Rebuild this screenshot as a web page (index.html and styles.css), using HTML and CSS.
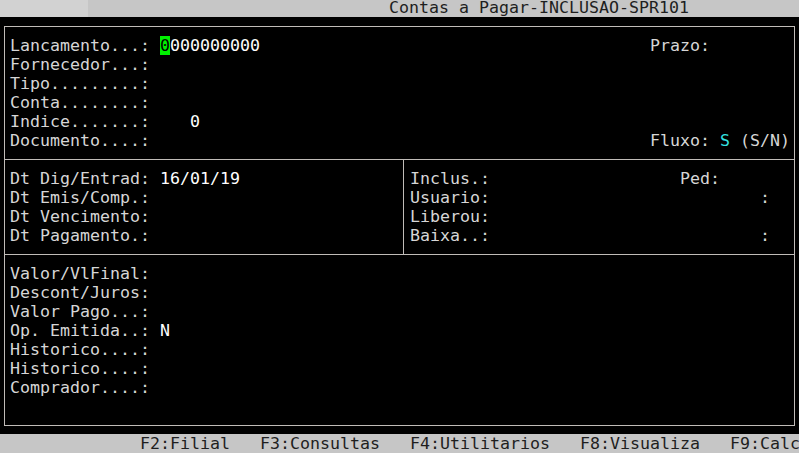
FILE: index.html
```html
<!DOCTYPE html>
<html lang="pt">
<head>
    <meta charset="UTF-8">
    <title>Contas a Pagar-INCLUSAO-SPR101</title>
    <link rel="stylesheet" href="styles.css">
</head>
<body>

    <!-- barra de titulo -->
    <div class="titlebar"><span class="title-light"></span><span class="title-text">Contas a Pagar-INCLUSAO-SPR101</span></div>

    <div class="frame">

        <!-- dados do lancamento -->
        <div class="section">
            <div class="row">Lancamento...: <span class="cursor">0</span><span class="value">000000000</span>                                       Prazo:</div>
            <div class="row">Fornecedor...:</div>
            <div class="row">Tipo.........:</div>
            <div class="row">Conta........:</div>
            <div class="row">Indice.......:    <span class="value">0</span></div>
            <div class="row">Documento....:                                                  Fluxo: <span class="cyan">S</span> (S/N)</div>
        </div>

        <!-- datas / controle -->
        <div class="section split">
            <div class="cell left">
                <div class="row">Dt Dig/Entrad: <span class="value">16/01/19</span></div>
                <div class="row">Dt Emis/Comp.:</div>
                <div class="row">Dt Vencimento:</div>
                <div class="row">Dt Pagamento.:</div>
            </div>
            <div class="cell right">
                <div class="row">Inclus.:                   Ped:</div>
                <div class="row">Usuario:                           :</div>
                <div class="row">Liberou:</div>
                <div class="row">Baixa..:                           :</div>
            </div>
        </div>

        <!-- valores -->
        <div class="section last">
            <div class="row">Valor/VlFinal:</div>
            <div class="row">Descont/Juros:</div>
            <div class="row">Valor Pago...:</div>
            <div class="row">Op. Emitida..: <span class="value">N</span></div>
            <div class="row">Historico....:</div>
            <div class="row">Historico....:</div>
            <div class="row">Comprador....:</div>
            <div class="row"> </div>
        </div>

    </div>

    <!-- teclas de funcao -->
    <div class="footer">              F2:Filial   F3:Consultas   F4:Utilitarios   F8:Visualiza   F9:Calc</div>

</body>
</html>
```

FILE: styles.css
```css
body {
    margin: 0;
    background-color: #000;
    color: #d6d6d6;
    font-family: "DejaVu Sans Mono", monospace;
    font-size: 16.61px;
    line-height: 19px;
    width: 799px;
    height: 453px;
    overflow: hidden;
}

.row,
.footer {
    white-space: pre;
}

/* barra de titulo */
.titlebar {
    height: 17px;
    background-color: #c6c6c6;
    color: #1e1e1e;
    position: relative;
}

.title-light {
    position: absolute;
    left: 0;
    top: 0;
    width: 88px;
    height: 17px;
    background-color: #d2d2d2;
}

.title-text {
    position: relative;
    display: inline-block;
    vertical-align: top;
    height: 17px;
    line-height: 15px;
    margin-left: 389px;
}

/* moldura principal */
.frame {
    margin: 9px 0 0 4px;
    width: 791px;
    box-sizing: border-box;
    border: 1px solid #c0bcb8;
}

.section {
    padding: 9px 0 9px 5px;
    border-bottom: 1px solid #c0bcb8;
}

.section.last {
    border-bottom: none;
}

.section.split {
    display: grid;
    grid-template-columns: 399px 1fr;
    padding: 0;
}

.cell {
    padding: 9px 0;
}

.cell.left {
    padding-left: 5px;
    border-right: 1px solid #c0bcb8;
}

.cell.right {
    padding-left: 6px;
}

.value {
    color: #fff;
}

.cursor {
    background-color: #00f000;
    color: #000;
}

.cyan {
    color: #34e2e2;
}

/* teclas de funcao */
.footer {
    margin-top: 8px;
    height: 19px;
    background-color: #c6c6c6;
    color: #1e1e1e;
}
```
